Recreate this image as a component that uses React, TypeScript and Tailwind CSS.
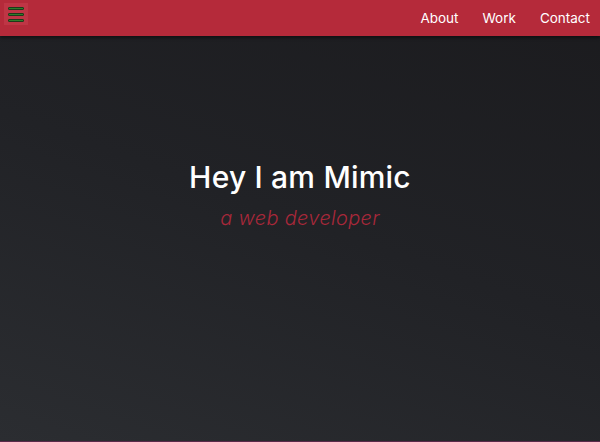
const links = ["About", "Work", "Contact"];

function MenuButton() {
  return (
    <button className="ml-1 mt-[3px] flex h-[22px] w-[24px] flex-col items-center justify-center gap-[3px] bg-[#bf3545]">
      <span className="h-[3px] w-[16px] rounded-[1px] border border-[#1f3a1a] bg-[#2f7d2a]" />
      <span className="h-[3px] w-[16px] rounded-[1px] border border-[#1f3a1a] bg-[#2f7d2a]" />
      <span className="h-[3px] w-[16px] rounded-[1px] border border-[#1f3a1a] bg-[#2f7d2a]" />
    </button>
  );
}

export default function App() {
  return (
    <div className="flex h-[442px] w-[600px] flex-col overflow-hidden font-['Inter',sans-serif] border-b border-[#5a2a4a] bg-[linear-gradient(200deg,#1b1b1e_0%,#212226_50%,#2b2d31_100%)]">
      <header className="relative z-10 flex h-[36px] shrink-0 items-start justify-between bg-[#b52a3a] shadow-[0_2px_3px_rgba(0,0,0,0.45)]">
        <MenuButton />
        <nav className="flex h-full items-center gap-[24px] pr-[10px] pt-px text-[13.5px] text-white">
          {links.map((l) => (
            <a key={l} className="cursor-pointer">
              {l}
            </a>
          ))}
        </nav>
      </header>
      <main className="flex flex-1 flex-col items-center pt-[121px]">
        <h1 className="text-[30px] font-medium leading-[40px] tracking-[0.2px] text-white">Hey I am Mimic</h1>
        <p className="mt-[7px] text-[20px] font-light italic leading-[28px] tracking-[0.3px] text-[#a8283a]">
          a web developer
        </p>
      </main>
    </div>
  );
}
